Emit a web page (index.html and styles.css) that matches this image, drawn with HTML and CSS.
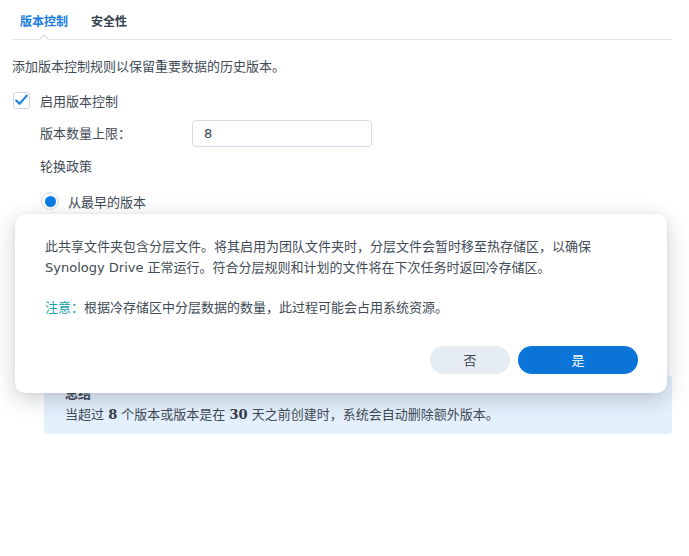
FILE: index.html
```html
<!DOCTYPE html>
<html lang="zh-CN">
<head>
<meta charset="utf-8">
<title>版本控制</title>
<link rel="stylesheet" href="styles.css">
</head>
<body>
<div class="page">
  <div class="tabs">
    <div class="tab active">版本控制</div>
    <div class="tab">安全性</div>
  </div>

  <p class="desc">添加版本控制规则以保留重要数据的历史版本。</p>

  <label class="check-row">
    <span class="checkbox">
      <svg viewBox="0 0 17 17" width="17" height="17"><path d="M2.5 8.5 L6.3 12.2 L14.5 3" fill="none" stroke="#1a82e6" stroke-width="2.4" stroke-linecap="round" stroke-linejoin="round"/></svg>
    </span>
    <span>启用版本控制</span>
  </label>

  <div class="field-row">
    <span class="field-label">版本数量上限：</span>
    <div class="input">8</div>
  </div>

  <div class="sub-title">轮换政策</div>

  <label class="radio-row">
    <span class="radio"><span class="dot"></span></span>
    <span>从最早的版本</span>
  </label>

  <div class="summary">
    <div class="summary-title">总结</div>
    <div>当超过 <b class="num">8</b> 个版本或版本是在 <b class="num">30</b> 天之前创建时，系统会自动删除额外版本。</div>
  </div>
</div>

<div class="dialog">
  <p class="dlg-text">此共享文件夹包含分层文件。将其启用为团队文件夹时，分层文件会暂时移至热存储区，以确保 Synology Drive 正常运行。符合分层规则和计划的文件将在下次任务时返回冷存储区。</p>
  <p class="dlg-note"><span class="note-label">注意：</span>根据冷存储区中分层数据的数量，此过程可能会占用系统资源。</p>
  <div class="dlg-buttons">
    <button class="btn btn-no">否</button>
    <button class="btn btn-yes">是</button>
  </div>
</div>
</body>
</html>
```

FILE: styles.css
```css
* { box-sizing: border-box; }

html, body {
  margin: 0;
  padding: 0;
  background: #ffffff;
}

body {
  font-family: "DejaVu Sans", "Noto Sans CJK SC", sans-serif;
  font-size: 13px;
  color: #414b56;
  width: 689px;
  height: 556px;
  overflow: hidden;
  position: relative;
}

.page {
  padding: 0 17px 0 12px;
}

.tabs {
  position: relative;
  display: flex;
  gap: 23px;
  height: 40px;
  padding: 12px 0 0 8px;
  border-bottom: 1px solid #dde3ea;
}

.tab {
  font-family: "Noto Sans CJK SC", sans-serif;
  font-size: 12px;
  font-weight: 700;
  line-height: 18px;
  color: #363f4a;
  position: relative;
}

.tab.active {
  color: #1a7ddf;
}

.tab.active::after,
.tab.active::before {
  content: "";
  position: absolute;
  left: 50%;
  width: 0;
  height: 0;
  border-left: 6px solid transparent;
  border-right: 6px solid transparent;
  transform: translateX(-50%);
}

.tab.active::before {
  top: 22px;
  border-bottom: 6px solid #dde3ea;
}

.tab.active::after {
  top: 23.5px;
  border-bottom: 6px solid #ffffff;
}

.desc {
  margin: 17px 0 0;
  line-height: 20px;
}

.check-row {
  display: flex;
  align-items: center;
  gap: 10px;
  margin-top: 13px;
  height: 20px;
  padding-left: 1px;
}

.checkbox {
  width: 17px;
  height: 17px;
  border: 1px solid #cfd8e2;
  border-radius: 3px;
  background: #fff;
  display: flex;
  align-items: center;
  justify-content: center;
}

.checkbox svg { display: block; }

.field-row {
  display: grid;
  grid-template-columns: 152px 180px;
  align-items: center;
  margin-top: 10px;
  padding-left: 28px;
}

.field-label {
  line-height: 20px;
}

.input {
  height: 27px;
  border: 1px solid #d3dce7;
  border-radius: 4px;
  padding-left: 11px;
  line-height: 25px;
  color: #3a4450;
  background: #fff;
}

.sub-title {
  margin-top: 10px;
  padding-left: 28px;
  line-height: 20px;
}

.radio-row {
  display: flex;
  align-items: center;
  gap: 9px;
  margin-top: 14px;
  height: 20px;
  padding-left: 29px;
}

.radio {
  width: 18px;
  height: 18px;
  border: 1px solid #d3dce7;
  border-radius: 50%;
  background: #fff;
  display: flex;
  align-items: center;
  justify-content: center;
}

.radio .dot {
  width: 11px;
  height: 11px;
  border-radius: 50%;
  background: #0a7be6;
}

.summary {
  margin: 164px 0 0 32px;
  background: #e4f0fc;
  border-radius: 4px;
  padding: 8px 20px 9px 21px;
  line-height: 21px;
  height: 59px;
}

.summary-title {
  font-weight: 700;
}

.num {
  font-family: "DejaVu Serif", serif;
  font-weight: 700;
  color: #353e49;
}

.dialog {
  position: absolute;
  left: 15px;
  top: 214px;
  width: 652px;
  height: 179px;
  background: #ffffff;
  border-radius: 10px;
  box-shadow: 0 6px 22px rgba(30, 40, 55, 0.22), 0 0 4px rgba(30, 40, 55, 0.06);
  padding: 22px 29px 19px 30px;
}

.dlg-text {
  margin: 0;
  line-height: 21px;
  width: 560px;
}

.dlg-note {
  margin: 19px 0 0;
  line-height: 21px;
}

.note-label {
  color: #16a0ad;
}

.dlg-buttons {
  display: flex;
  justify-content: flex-end;
  gap: 8px;
  margin-top: 28px;
}

.btn {
  height: 28px;
  border: none;
  border-radius: 14px;
  font-family: "Noto Sans CJK SC", sans-serif;
  font-size: 13px;
  line-height: 28px;
  padding: 0;
  cursor: pointer;
}

.btn-no {
  width: 80px;
  background: #e6ecf3;
  color: #3a4450;
}

.btn-yes {
  width: 120px;
  background: #0a74d9;
  color: #ffffff;
}
```
